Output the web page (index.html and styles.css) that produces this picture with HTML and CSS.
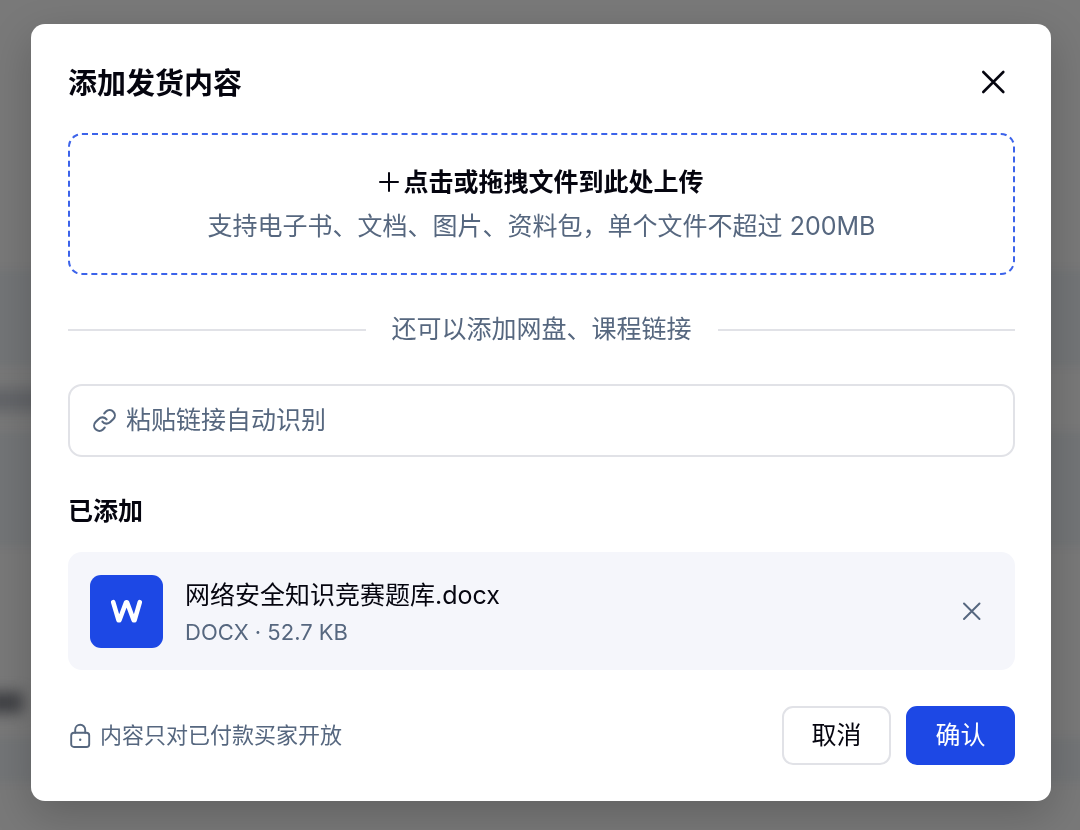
FILE: index.html
```html
<!DOCTYPE html>
<html lang="zh-CN">
<head>
<meta charset="utf-8">
<meta name="viewport" content="width=device-width, initial-scale=1">
<title>添加发货内容</title>
<link rel="stylesheet" href="styles.css">
</head>
<body>
<div class="page" aria-hidden="true">
  <div class="page-band band-1"></div>
  <div class="page-band band-2"></div>
  <div class="page-band band-3"></div>
  <div class="page-mark mark-1"></div>
  <div class="page-mark mark-2"></div>
</div>
<main class="overlay">
  <section class="modal" role="dialog" aria-modal="true" aria-labelledby="modal-title">
    <header class="modal-header">
      <h1 class="modal-title" id="modal-title">添加发货内容</h1>
      <button class="icon-button close-button" type="button" aria-label="关闭">
        <svg width="44" height="44" viewBox="0 0 44 44" fill="none" stroke="currentColor" stroke-width="2.6" stroke-linecap="round"><path d="M12.300 12 32.300 32M32.300 12 12.300 32"/></svg>
      </button>
    </header>

    <button class="dropzone" type="button">
      <span class="dropzone-title">
        <svg width="20" height="20" viewBox="0 0 20 20" fill="none" stroke="currentColor" stroke-width="2" stroke-linecap="round"><path d="M10 1v18M1 10h18"/></svg>
        <span>点击或拖拽文件到此处上传</span>
      </span>
      <span class="dropzone-hint">支持电子书、文档、图片、资料包，单个文件不超过 200MB</span>
    </button>

    <div class="divider"><span>还可以添加网盘、课程链接</span></div>

    <label class="link-field">
      <svg width="25" height="25" viewBox="0 0 24 24" fill="none" stroke="currentColor" stroke-width="2" stroke-linecap="round" stroke-linejoin="round"><path d="M10 13a5 5 0 0 0 7.54.54l3-3a5 5 0 0 0-7.07-7.07l-1.720 1.710"/><path d="M14 11a5 5 0 0 0-7.54-.54l-3 3a5 5 0 0 0 7.070 7.070l1.710-1.710"/></svg>
      <input class="link-input" type="text" placeholder="粘贴链接自动识别" aria-label="粘贴链接自动识别">
    </label>

    <section class="added">
      <h2 class="added-title">已添加</h2>
      <div class="file-card">
        <svg class="file-icon" width="73" height="73" viewBox="0 0 73 73" fill="none"><rect width="73" height="73" rx="11" fill="#1d48e5"/><path d="M23.200 27.200 28.600 45.300H29.400L36.100 27.200H37L43.700 45.300H44.500L49.800 27.200" stroke="#fff" stroke-width="4.600" stroke-linecap="round" stroke-linejoin="round"/></svg>
        <div class="file-info">
          <div class="file-name">网络安全知识竞赛题库.docx</div>
          <div class="file-meta">DOCX · 52.7 KB</div>
        </div>
        <button class="icon-button remove-button" type="button" aria-label="移除文件">
          <svg width="44" height="44" viewBox="0 0 44 44" fill="none" stroke="currentColor" stroke-width="2" stroke-linecap="round"><path d="M15 14.500 30.500 30M30.500 14.500 15 30"/></svg>
        </button>
      </div>
    </section>

    <footer class="modal-footer">
      <p class="privacy">
        <svg width="26" height="26" viewBox="0 0 26 26" fill="none" stroke="currentColor" stroke-width="1.9" stroke-linecap="round"><rect x="3.200" y="9.700" width="18" height="14.300" rx="2.800"/><path d="M7.200 9.700V6.800a5 5 0 0 1 10 0v2.900"/><circle cx="12.200" cy="16.800" r="1.200" fill="currentColor" stroke="none"/></svg>
        <span>内容只对已付款买家开放</span>
      </p>
      <div class="actions">
        <button class="button" type="button">取消</button>
        <button class="button button-primary" type="button">确认</button>
      </div>
    </footer>
  </section>
</main>
</body>
</html>
```
FILE: styles.css
```css
*,
*::before,
*::after {
  box-sizing: border-box;
}

body {
  margin: 0;
  min-height: 100vh;
  background: #797979;
  color: #05050f;
  font-family: Inter, "Noto Sans CJK SC", sans-serif;
  font-size: 25px;
  line-height: 37px;
}

h1,
h2,
p {
  margin: 0;
}

button,
input {
  font: inherit;
  color: inherit;
}

svg {
  display: block;
  flex: none;
}

/* Blurred page behind the dialog */
.page {
  position: fixed;
  inset: 0;
  overflow: hidden;
}

.page-band {
  position: absolute;
  left: -20px;
  right: -20px;
  background: #737577;
  filter: blur(4px);
}

.band-1 {
  top: 270px;
  height: 96px;
}

.band-2 {
  top: 432px;
  height: 114px;
}

.band-3 {
  top: 738px;
  height: 44px;
}

.page-mark {
  position: absolute;
  left: -20px;
  filter: blur(7px);
}

.mark-1 {
  top: 389px;
  width: 80px;
  height: 22px;
  background: #626468;
}

.mark-2 {
  top: 692px;
  width: 43px;
  height: 21px;
  background: #3f4044;
}

.overlay {
  position: relative;
  padding: 24px 29px 29px 31px;
}

.modal {
  display: flex;
  flex-direction: column;
  gap: 36px;
  padding: 36px 36px 36px 37px;
  border-radius: 14px;
  background: #fff;
  box-shadow: 0 14px 44px rgba(0, 0, 0, 0.2);
}

.modal-header {
  display: flex;
  align-items: center;
  justify-content: space-between;
  margin-bottom: -7px;
}

.modal-title {
  padding-top: 4px;
  font-size: 29px;
  font-weight: 600;
  line-height: 40px;
}

.icon-button {
  padding: 0;
  border: 0;
  background: none;
  cursor: pointer;
}

.dropzone {
  display: flex;
  flex-direction: column;
  align-items: center;
  gap: 8px;
  padding: 29px;
  border: 2px dashed #3c63ea;
  border-radius: 14px;
  background: none;
  line-height: 36px;
  cursor: pointer;
}

.dropzone-title {
  display: flex;
  align-items: center;
  gap: 4px;
  font-weight: 600;
}

.dropzone-hint,
.divider,
.link-field,
.file-meta,
.privacy,
.remove-button {
  color: #56677f;
}

.divider {
  display: flex;
  align-items: center;
  gap: 26px;
}

.divider::before,
.divider::after {
  content: "";
  flex: 1;
  height: 2px;
  background: #e1e2e7;
}

.link-field {
  display: flex;
  align-items: center;
  gap: 9px;
  padding: 16px 22px;
  border: 2px solid #e1e2e7;
  border-radius: 14px;
}

.link-input {
  flex: 1;
  min-width: 0;
  height: 37px;
  padding: 0;
  border: 0;
  outline: 0;
  background: none;
}

.link-input::placeholder {
  color: inherit;
  opacity: 1;
}

.added {
  display: flex;
  flex-direction: column;
  gap: 22px;
}

.added-title {
  font-size: 25px;
  font-weight: 600;
}

.file-card {
  display: flex;
  align-items: center;
  gap: 22px;
  padding: 19px 22px;
  border-radius: 14px;
  background: #f5f6fb;
}

.file-info {
  flex: 1;
  min-width: 0;
  padding-top: 6px;
}

.file-meta {
  font-size: 22px;
}

.modal-footer {
  display: flex;
  align-items: center;
  justify-content: space-between;
}

.privacy {
  display: flex;
  align-items: center;
  gap: 6px;
  font-size: 22px;
}

.actions {
  display: flex;
  gap: 15px;
}

.button {
  width: 109px;
  height: 59px;
  padding: 0;
  border: 2px solid #e1e2e7;
  border-radius: 11px;
  background: #fff;
  cursor: pointer;
}

.button-primary {
  border-color: #1d48e5;
  background: #1d48e5;
  color: #fff;
}
```
